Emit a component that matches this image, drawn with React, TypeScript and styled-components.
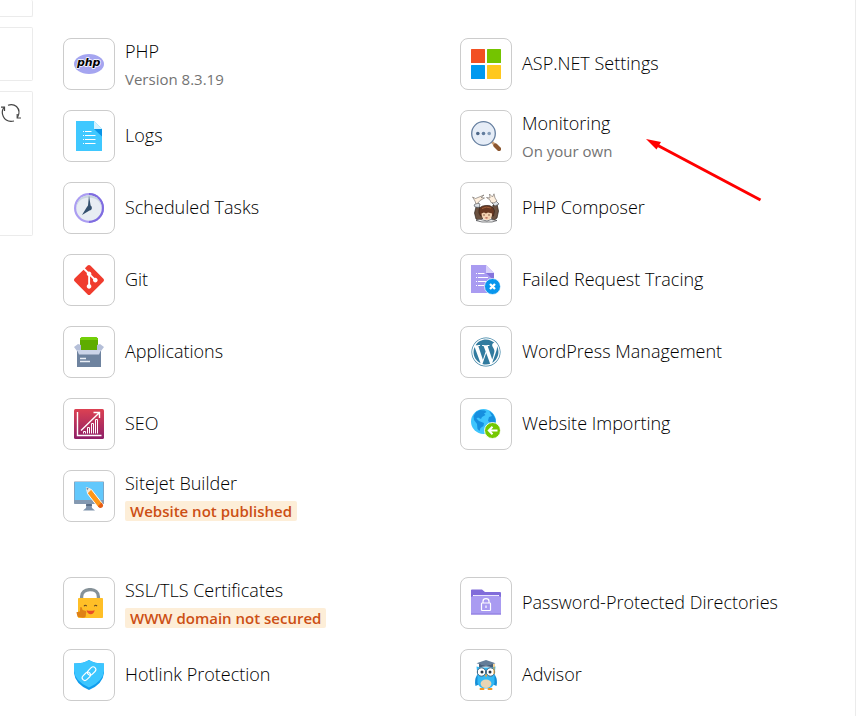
import React from "react";
import styled, { createGlobalStyle } from "styled-components";
import { SiGit } from "react-icons/si";
import { FaWordpress } from "react-icons/fa6";

const GlobalStyle = createGlobalStyle`
  *, *::before, *::after { box-sizing: border-box; }
  body {
    margin: 0;
    background: #fff;
    color: #000;
    font-family: "Open Sans", "Noto Sans", sans-serif;
  }
`;

const Page = styled.div`
  display: flex;
  min-height: 100vh;
`;

const Sidebar = styled.aside`
  display: flex;
  flex: none;
  flex-direction: column;
  gap: 10px;
  width: 33px;
`;

const SideCard = styled.div<{ $height: number }>`
  height: ${(p) => p.$height}px;
  border: 1px solid #ebebeb;
  border-left: 0;
  border-radius: 0 2px 2px 0;

  &:first-child {
    border-top: 0;
  }
`;

const RefreshButton = styled.button`
  display: block;
  margin-top: 10px;
  padding: 0;
  border: 0;
  background: none;
  color: #444;
  cursor: pointer;

  svg {
    display: block;
  }
`;

const Main = styled.main`
  display: flex;
  flex: 1;
  flex-direction: column;
  gap: 55px;
  min-width: 0;
  padding: 38px 22px 15px 30px;
  border-right: 1px solid #ebebeb;
`;

const Group = styled.section`
  display: grid;
  grid-template-columns: repeat(2, minmax(0, 1fr));
  gap: 20px 24px;
`;

const Cell = styled.div`
  position: relative;
`;

const ToolLink = styled.a`
  display: flex;
  align-items: center;
  gap: 10px;
  color: inherit;
  text-decoration: none;
`;

const Tile = styled.span`
  display: flex;
  flex: none;
  align-items: center;
  justify-content: center;
  width: 52px;
  height: 52px;
  border: 1px solid #ccc;
  border-radius: 8px;
  background: #fff;
`;

const Labels = styled.span`
  display: flex;
  flex-direction: column;
  align-items: flex-start;
  gap: 5px;
  padding-bottom: 1px;
  white-space: nowrap;
`;

const Title = styled.span`
  font-size: 18px;
  font-weight: 300;
  line-height: 26px;

  &:only-child {
    padding-bottom: 1px;
  }
`;

const Note = styled.span`
  color: #737373;
  font-size: 15px;
  line-height: 20px;
`;

const Badge = styled.span`
  padding: 0 5px;
  border-radius: 2px;
  background: #fdeed8;
  color: #cc4f14;
  font-size: 15px;
  font-weight: 600;
  line-height: 20px;
`;

const Pointer = styled.svg`
  position: absolute;
  top: 28px;
  left: 186px;
  pointer-events: none;
`;

function Icon({ children }: { children: React.ReactNode }) {
  return (
    <svg width="30" height="30" viewBox="0 0 30 30" aria-hidden="true">
      {children}
    </svg>
  );
}

const PhpIcon = () => (
  <Icon>
    <ellipse cx="15" cy="15" rx="15" ry="10" fill="#a5a5f0" />
    <text
      x="14.7"
      y="17"
      textAnchor="middle"
      fontFamily="DejaVu Sans, sans-serif"
      fontSize="11"
      fontWeight="700"
      fontStyle="italic"
      fill="#000"
      stroke="#fff"
      strokeWidth="1.5"
      strokeLinejoin="round"
      paintOrder="stroke"
    >
      php
    </text>
  </Icon>
);

const LogsIcon = () => (
  <Icon>
    <path d="M2 0H20L28 8V30H2Z" fill="#3fc8ff" />
    <path d="M20 0L28 8H20Z" fill="#d3f2ff" />
    <path d="M20 8H28V15.5Z" fill="#0a94e6" />
    <path d="M11 10.5H17.5M11 14.5H21.5M11 18.5H21.5M11 22.5H21.5" stroke="#fff" />
    <path d="M9 10.5H10M9 14.5H10M9 18.5H10M9 22.5H10" stroke="#fff" />
  </Icon>
);

const ClockIcon = () => (
  <Icon>
    <circle cx="15" cy="15" r="15" fill="#ab9df2" />
    <path d="M15 0A15 15 0 0 1 15 30Z" fill="#7f6ce0" />
    <circle cx="15" cy="15" r="12.8" fill="#e8edf3" />
    <path d="M2.2 15A12.8 12.8 0 0 1 27.8 15C26 7 21 4.8 15 4.8S4 7 2.2 15Z" fill="#c9d5e0" />
    <path d="M15 2.5L16.6 12.6A2.7 2.7 0 0 1 15.5 17.6L8 22L12.6 14.5L14 12.5Z" fill="#34506e" />
  </Icon>
);

const AppsIcon = () => (
  <Icon>
    <path d="M3 9H27V30H3Z" fill="#6e839f" />
    <path d="M3 8H27V13H3Z" fill="#8b9bb7" />
    <path d="M6 1.5L8 0H22L24 1.5V13H6Z" fill="#5eac00" />
    <path d="M6 1.5L8 0H22L24 1.5V3H6Z" fill="#73cf08" />
    <path d="M4 7L0 10L3 14L7 13V8ZM26 7L30 10L27 14L23 13V8Z" fill="#b5bfd8" />
    <path d="M3 13H27L25 17.5H5Z" fill="#cbd4e8" />
    <path d="M6 21.5H12M6 24.5H16" stroke="#e9eef5" strokeWidth="1.3" />
  </Icon>
);

const SeoIcon = () => (
  <Icon>
    <defs>
      <linearGradient id="seo" x1="0" y1="0" x2="0" y2="1">
        <stop offset="0" stopColor="#dc4152" />
        <stop offset="1" stopColor="#8e1f68" />
      </linearGradient>
    </defs>
    <rect width="30" height="30" rx="1.5" fill="url(#seo)" />
    <path d="M3.5 3V26.5H27.5" fill="none" stroke="#fff" strokeWidth="1.4" />
    <path d="M7 21.5L25 4M19.5 3.5H25.5V9" fill="none" stroke="#fff" strokeWidth="1.4" />
    <path
      d="M9.5 24.5V22.5H11.5V24.5M13.5 24.5V18.5H15.5V24.5M17.5 24.5V14.5H19.5V24.5M21.5 24.5V10.5H23.5V24.5"
      fill="none"
      stroke="#fff"
    />
  </Icon>
);

const SitejetIcon = () => (
  <Icon>
    <path d="M12.5 22H17.5L18 27L21 29.5H9L12 27Z" fill="#7e93ac" />
    <path d="M12.3 22H17.7L18 25H12Z" fill="#596d86" />
    <rect y="0.5" width="30" height="22.5" rx="0.7" fill="#8499b1" />
    <rect x="0.7" y="1" width="28.6" height="18" fill="#62c8fc" />
    <path d="M12.3 6.5L17.5 8.6L28.4 22.5L24.4 26.7L13.7 12.8Z" fill="#ff9718" stroke="#fff" strokeWidth="1" />
    <path d="M12.3 6.5L17.5 8.6L14 12Z" fill="#f8e7d5" />
    <path d="M12.3 6.5L14.7 7.5L13 9.3Z" fill="#6d819a" />
    <path d="M23.8 25.3L27.6 21.6L29 23.7A2.7 2.7 0 0 1 25.7 27Z" fill="#e65c13" />
  </Icon>
);

const LockIcon = () => (
  <Icon>
    <path d="M7.6 12V8.7C7.6 4.5 11 1.6 16 1.6S24.4 4.5 24.4 8.7V12" fill="none" stroke="#859198" strokeWidth="3.3" />
    <rect x="4" y="10" width="25" height="20" rx="0.8" fill="#ffbf27" />
    <path d="M10 18.2Q11.3 16.3 12.7 18.2M20.3 18.2Q21.6 16.3 23 18.2" fill="none" stroke="#604425" strokeWidth="1.1" />
    <path d="M12.5 22.2Q16.5 23.5 20.7 22.2Q19.7 26.3 16.7 26.3T12.5 22.2Z" fill="#e84f27" />
    <path
      d="M5.9 23.5L6.3 19.3Q6.8 18.4 7.8 19.6L8.6 22L12 23Q12.8 24.2 12 25.3L11.7 28.5Q10.7 30 8.5 29.8L3.5 28.8L2.4 24.2Z"
      fill="#df8115"
    />
  </Icon>
);

const ShieldIcon = () => (
  <Icon>
    <path d="M15 0Q20 3.5 30 3.5V13Q29 24 15 30Q1 24 0 13V3.5Q10 3.5 15 0Z" fill="#119ded" />
    <path d="M15 0Q20 3.5 30 3.5V11Q29 21.5 15 27.5Q1 21.5 0 11V3.5Q10 3.5 15 0Z" fill="#3cc6ff" />
    <g fill="none" stroke="#fff" strokeWidth="1.1" transform="rotate(-45 15 13.7)">
      <rect x="6.5" y="11" width="9.5" height="5.4" rx="2.7" />
      <rect x="14" y="11" width="9.5" height="5.4" rx="2.7" />
    </g>
  </Icon>
);

const WindowsIcon = () => (
  <Icon>
    <rect width="14" height="14" rx="0.5" fill="#f25022" />
    <rect x="16" width="14" height="14" rx="0.5" fill="#74c400" />
    <rect y="16" width="14" height="14" rx="0.5" fill="#0099ef" />
    <rect x="16" y="16" width="14" height="14" rx="0.5" fill="#ffc81e" />
  </Icon>
);

const MonitoringIcon = () => (
  <Icon>
    <path d="M20.5 20.5L25 25" stroke="#cda37b" strokeWidth="2.5" />
    <path d="M24.5 24.5L28 28" stroke="#8c5730" strokeWidth="4.3" strokeLinecap="round" />
    <circle cx="12.5" cy="12.5" r="11.8" fill="#e6edf7" stroke="#647e9f" strokeWidth="1.3" />
    <circle cx="6.8" cy="12.5" r="1.8" fill="#4d6788" />
    <circle cx="12.5" cy="12.5" r="1.8" fill="#627d9e" />
    <circle cx="18.2" cy="12.5" r="1.8" fill="#849dba" />
  </Icon>
);

const ComposerIcon = () => (
  <Icon>
    <path d="M5 14L9 14L10 19L12 25L9 28L5 26L3.5 20ZM22 12L26 11L27.5 18L26 25L22 28L20 24Z" fill="#6b5140" stroke="#2d241e" strokeWidth="0.7" />
    <path d="M3 12L6 10L9 11L8 14.5L4 14ZM21 10L25 8L28 11L24 13Z" fill="#dfe3e8" stroke="#555a62" strokeWidth="0.7" />
    <path d="M5 11L4 8L1.5 4L4.5 5.5L7 4.5L13 2L10 4.5L13.5 5L9 7.5L7 10ZM20 9.5L19 7L15.5 4.5L19 5L18.5 1L21.5 4L23 .8L24 5L26 8L23 10Z" fill="#fff0df" stroke="#6b6460" strokeWidth="0.6" />
    <path d="M8 20Q7 13 14 12.5Q22 11.5 23.5 18L22.5 23H9.5Z" fill="#683822" stroke="#2f211a" strokeWidth="0.6" />
    <path d="M11 15.5Q15 13 20 15" fill="none" stroke="#a0623e" />
    <path d="M10.5 20.5L13 19.5L15 20.5L17 19.5L21 20.5Q21.5 27 16 27T10.5 20.5Z" fill="#f5d3b3" />
    <path d="M12 22H14M17 22H19" stroke="#69452f" strokeWidth="0.8" />
    <ellipse cx="15.5" cy="24.8" rx="1.3" ry="0.9" fill="#bf7466" />
    <path d="M5 27.5Q9 25.5 12 27L16 28L20 26.5L26 27.5L21 29H11Z" fill="#f5f5f5" stroke="#494b4f" strokeWidth="0.7" />
  </Icon>
);

const TracingIcon = () => (
  <Icon>
    <path d="M0 0H15L23 8V28H0Z" fill="#a99bf1" />
    <path d="M15 0L23 8H15Z" fill="#d9d2fb" />
    <path d="M15 8H23V15.5Z" fill="#8574dc" />
    <path d="M7 8.5H13.5M7 12.5H17M7 16.5H15M7 20.5H13M5 8.5H6M5 12.5H6M5 16.5H6M5 20.5H6" stroke="#fff" />
    <circle cx="21.5" cy="21.5" r="8" fill="#0996ed" stroke="#fff" strokeWidth="0.7" />
    <path d="M19 19L24 24M24 19L19 24" stroke="#fff" strokeWidth="2.3" />
  </Icon>
);

const ImportIcon = () => (
  <Icon>
    <circle cx="12.5" cy="12.5" r="12.5" fill="#3fc5fd" />
    <path d="M5 3L9 1L14 1.5L15.5 3L13 4.5L14.5 6L11 8L10 10L7 8.5L5.5 9.5L8 12L13 14L12.5 17L9.5 19L8.5 22L6.5 20L6 15L3 11L2.5 7Z" fill="#168fdf" />
    <path d="M18 2L22 5L24.5 10V14L22 15.5L19 14.5L17 11.5L18 8L21 7Z" fill="#168fdf" />
    <circle cx="21.5" cy="21.5" r="8" fill="#74c800" stroke="#fff" strokeWidth="0.9" />
    <path d="M26.5 21.5H18M21.5 17.8L17.8 21.5L21.5 25.2" fill="none" stroke="#fff" strokeWidth="2" />
  </Icon>
);

const FolderIcon = () => (
  <Icon>
    <path d="M0 2Q0 1.5 1 1.5H11L14 4H29Q30 4 30 5V26H0Z" fill="#806cda" />
    <path d="M2 7.5H28" stroke="#fff" />
    <path d="M0 9L3 7.8H27L30 9V26.5H0Z" fill="#a99bf1" />
    <path d="M0 26H30" stroke="#8b78dc" />
    <rect x="10.5" y="15" width="9" height="7.5" rx="0.7" fill="none" stroke="#fff" strokeWidth="1.2" />
    <path d="M12 15V13.3Q12 10.7 15 10.7T18 13.3V15M15 17.5V20" fill="none" stroke="#fff" strokeWidth="1.2" />
  </Icon>
);

const OwlIcon = () => (
  <Icon>
    <path d="M6 15Q3 20 4.5 26L9 24V14ZM24 15Q27 20 25.5 26L21 24V14Z" fill="#168ed6" />
    <path d="M5.5 6.5L10 7.5H20L24.5 6.5L23.5 16V23Q22 28.5 15 28.5T6.5 23V16Z" fill="#33b9f5" />
    <ellipse cx="15" cy="23.8" rx="5.4" ry="4.2" fill="#e8d5b4" />
    <circle cx="10.5" cy="12" r="4.2" fill="#fff" stroke="#3a5f7d" />
    <circle cx="19.5" cy="12" r="4.2" fill="#fff" stroke="#3a5f7d" />
    <circle cx="11" cy="12" r="1.5" fill="#263442" />
    <circle cx="19" cy="12" r="1.5" fill="#263442" />
    <path d="M13.8 14.5H16.2L15 17.5Z" fill="#ff9e23" />
    <path d="M8 3.5L15 5.5L22 3.5V7.5Q15 5.5 8 7.5Z" fill="#465e78" />
    <path d="M5.5 3.2L15 0L24.5 3.2L15 6Z" fill="#647d98" />
    <path d="M23 4V14" stroke="#f0a52d" />
    <path d="M9.5 29H12.5M17.5 29H20.5" stroke="#f39722" strokeWidth="2" strokeLinecap="round" />
  </Icon>
);

type Tool = {
  title: string;
  icon: React.ReactNode;
  note?: string;
  warning?: string;
  pointed?: boolean;
};

const hostingTools: Tool[] = [
  { title: "PHP", icon: <PhpIcon />, note: "Version 8.3.19" },
  { title: "ASP.NET Settings", icon: <WindowsIcon /> },
  { title: "Logs", icon: <LogsIcon /> },
  { title: "Monitoring", icon: <MonitoringIcon />, note: "On your own", pointed: true },
  { title: "Scheduled Tasks", icon: <ClockIcon /> },
  { title: "PHP Composer", icon: <ComposerIcon /> },
  { title: "Git", icon: <SiGit size={30} color="#f03c2e" aria-hidden /> },
  { title: "Failed Request Tracing", icon: <TracingIcon /> },
  { title: "Applications", icon: <AppsIcon /> },
  { title: "WordPress Management", icon: <FaWordpress size={30} color="#317b9f" aria-hidden /> },
  { title: "SEO", icon: <SeoIcon /> },
  { title: "Website Importing", icon: <ImportIcon /> },
  { title: "Sitejet Builder", icon: <SitejetIcon />, warning: "Website not published" },
];

const securityTools: Tool[] = [
  { title: "SSL/TLS Certificates", icon: <LockIcon />, warning: "WWW domain not secured" },
  { title: "Password-Protected Directories", icon: <FolderIcon /> },
  { title: "Hotlink Protection", icon: <ShieldIcon /> },
  { title: "Advisor", icon: <OwlIcon /> },
];

function ToolGroup({ label, tools }: { label: string; tools: Tool[] }) {
  return (
    <Group aria-label={label}>
      {tools.map((tool) => (
        <Cell key={tool.title}>
          <ToolLink href="#">
            <Tile>{tool.icon}</Tile>
            <Labels>
              <Title>{tool.title}</Title>
              {tool.note && <Note>{tool.note}</Note>}
              {tool.warning && <Badge>{tool.warning}</Badge>}
            </Labels>
          </ToolLink>
          {tool.pointed && (
            <Pointer width="116" height="64" viewBox="0 0 116 64" aria-hidden="true">
              <path d="M10 6.5L114.5 62" stroke="#f00" strokeWidth="3" />
              <path d="M0 1L15 4L10.5 11.5Z" fill="#f00" />
            </Pointer>
          )}
        </Cell>
      ))}
    </Group>
  );
}

export default function App() {
  return (
    <>
      <GlobalStyle />
      <Page>
        <Sidebar>
          <SideCard $height={17} />
          <SideCard $height={54} />
          <SideCard $height={145}>
            <RefreshButton type="button" aria-label="Refresh">
              <svg width="22" height="22" viewBox="0 0 22 22" fill="none" stroke="currentColor" strokeWidth="1.2">
                <path d="M3.8 5.5Q1 10 3.3 14.5Q6 20.5 14 19" />
                <path d="M8 3.2Q13 1.5 16.5 4.5Q21 9 17.5 15.5" />
                <path d="M1 5.2H4.5V9M21 16H17.2V12" />
              </svg>
            </RefreshButton>
          </SideCard>
        </Sidebar>
        <Main>
          <ToolGroup label="Hosting tools" tools={hostingTools} />
          <ToolGroup label="Security" tools={securityTools} />
        </Main>
      </Page>
    </>
  );
}
